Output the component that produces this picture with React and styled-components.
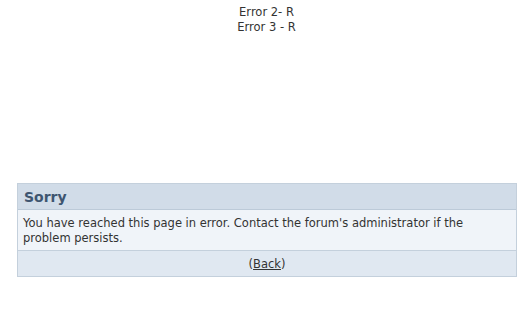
import React from 'react';
import styled, { createGlobalStyle } from 'styled-components';

const GlobalStyle = createGlobalStyle`
  html, body {
    margin: 0;
    padding: 0;
    background: #ffffff;
  }
  body {
    font-family: "DejaVu Sans", Verdana, sans-serif;
    color: #333333;
  }
`;

const Page = styled.div`
  width: 532px;
  min-height: 317px;
  box-sizing: border-box;
  padding: 5px 16px 0 17px;
`;

const Debug = styled.div`
  text-align: center;
  font-size: 11.5px;
  line-height: 15px;
  color: #333333;
  margin-bottom: 148px;
`;

const Panel = styled.div`
  border: 1px solid #c4d0dc;
  width: 500px;
  box-sizing: border-box;
`;

const Header = styled.div`
  background: #d1dce8;
  color: #3e5570;
  font-weight: bold;
  font-size: 14px;
  height: 25px;
  line-height: 26px;
  padding: 0 6px;
  border-bottom: 1px solid #bccad8;
`;

const Body = styled.div`
  background: #f0f4f9;
  font-size: 11.5px;
  line-height: 15px;
  padding: 6px 6px 4px 5px;
  color: #333333;
  border-bottom: 1px solid #c4d0dc;
`;

const Footer = styled.div`
  background: #e0e8f1;
  text-align: center;
  font-size: 11.5px;
  height: 25px;
  line-height: 27px;

  a {
    color: #333333;
    text-decoration: underline;
  }
`;

export default function App() {
  return (
    <>
      <GlobalStyle />
      <Page>
        <Debug>
          <div>Error 2- R</div>
          <div>Error 3 - R</div>
        </Debug>
        <Panel>
          <Header>Sorry</Header>
          <Body>
            You have reached this page in error. Contact the forum's administrator if the problem persists.
          </Body>
          <Footer>
            (<a href="#back">Back</a>)
          </Footer>
        </Panel>
      </Page>
    </>
  );
}
